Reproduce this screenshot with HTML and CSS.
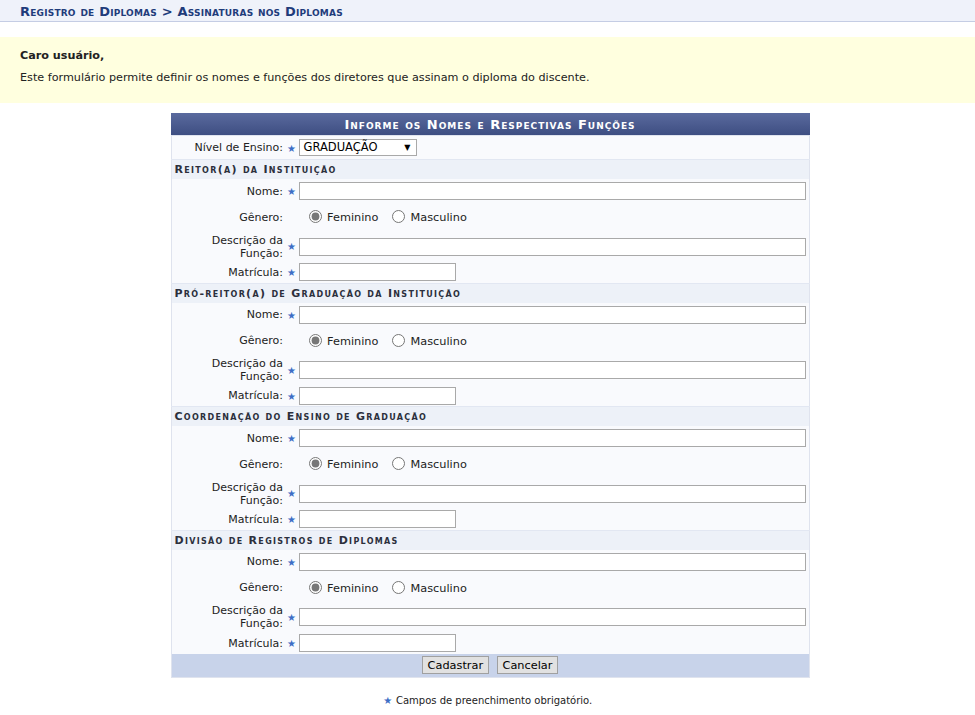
FILE: index.html
```html
<!DOCTYPE html>
<html lang="pt-BR">
<head>
    <meta charset="UTF-8">
    <title>Assinaturas nos Diplomas</title>
    <link rel="stylesheet" href="styles.css">
</head>
<body>
    <h2 class="breadcrumb">Registro de Diplomas &gt; Assinaturas nos Diplomas</h2>

    <div class="descricao">
        <p class="saudacao">Caro usuário,</p>
        <p>Este formulário permite definir os nomes e funções dos diretores que assinam o diploma do discente.</p>
    </div>

    <table class="formulario">
        <caption>Informe os Nomes e Respectivas Funções</caption>
        <tbody>
            <tr class="linha-nivel">
                <th>Nível de Ensino: <span class="req">&#9733;</span></th>
                <td>
                    <div class="select">GRADUAÇÃO <span class="seta">&#9660;</span></div>
                </td>
            </tr>

            <tr class="subtitulo"><td colspan="2">Reitor(a) da Instituição</td></tr>
            <tr class="linha-nome">
                <th>Nome: <span class="req">&#9733;</span></th>
                <td><input type="text" class="campo-longo"></td>
            </tr>
            <tr class="linha-genero">
                <th>Gênero: <span class="espaco"></span></th>
                <td>
                    <label><input type="radio" name="g1" checked> Feminino</label>
                    <label><input type="radio" name="g1"> Masculino</label>
                </td>
            </tr>
            <tr class="linha-descricao">
                <th><span class="rotulo">Descrição da<br>Função:</span> <span class="req">&#9733;</span></th>
                <td><input type="text" class="campo-longo"></td>
            </tr>
            <tr class="linha-matricula">
                <th>Matrícula: <span class="req">&#9733;</span></th>
                <td><input type="text" class="campo-curto"></td>
            </tr>

            <tr class="subtitulo"><td colspan="2">Pró-reitor(a) de Graduação da Instituição</td></tr>
            <tr class="linha-nome">
                <th>Nome: <span class="req">&#9733;</span></th>
                <td><input type="text" class="campo-longo"></td>
            </tr>
            <tr class="linha-genero">
                <th>Gênero: <span class="espaco"></span></th>
                <td>
                    <label><input type="radio" name="g2" checked> Feminino</label>
                    <label><input type="radio" name="g2"> Masculino</label>
                </td>
            </tr>
            <tr class="linha-descricao">
                <th><span class="rotulo">Descrição da<br>Função:</span> <span class="req">&#9733;</span></th>
                <td><input type="text" class="campo-longo"></td>
            </tr>
            <tr class="linha-matricula">
                <th>Matrícula: <span class="req">&#9733;</span></th>
                <td><input type="text" class="campo-curto"></td>
            </tr>

            <tr class="subtitulo"><td colspan="2">Coordenação do Ensino de Graduação</td></tr>
            <tr class="linha-nome">
                <th>Nome: <span class="req">&#9733;</span></th>
                <td><input type="text" class="campo-longo"></td>
            </tr>
            <tr class="linha-genero">
                <th>Gênero: <span class="espaco"></span></th>
                <td>
                    <label><input type="radio" name="g3" checked> Feminino</label>
                    <label><input type="radio" name="g3"> Masculino</label>
                </td>
            </tr>
            <tr class="linha-descricao">
                <th><span class="rotulo">Descrição da<br>Função:</span> <span class="req">&#9733;</span></th>
                <td><input type="text" class="campo-longo"></td>
            </tr>
            <tr class="linha-matricula">
                <th>Matrícula: <span class="req">&#9733;</span></th>
                <td><input type="text" class="campo-curto"></td>
            </tr>

            <tr class="subtitulo"><td colspan="2">Divisão de Registros de Diplomas</td></tr>
            <tr class="linha-nome">
                <th>Nome: <span class="req">&#9733;</span></th>
                <td><input type="text" class="campo-longo"></td>
            </tr>
            <tr class="linha-genero">
                <th>Gênero: <span class="espaco"></span></th>
                <td>
                    <label><input type="radio" name="g4" checked> Feminino</label>
                    <label><input type="radio" name="g4"> Masculino</label>
                </td>
            </tr>
            <tr class="linha-descricao">
                <th><span class="rotulo">Descrição da<br>Função:</span> <span class="req">&#9733;</span></th>
                <td><input type="text" class="campo-longo"></td>
            </tr>
            <tr class="linha-matricula">
                <th>Matrícula: <span class="req">&#9733;</span></th>
                <td><input type="text" class="campo-curto"></td>
            </tr>
        </tbody>
        <tfoot>
            <tr>
                <td colspan="2">
                    <button type="button">Cadastrar</button>
                    <button type="button">Cancelar</button>
                </td>
            </tr>
        </tfoot>
    </table>

    <p class="obrigatorio"><span class="req">&#9733;</span> Campos de preenchimento obrigatório.</p>
</body>
</html>
```

FILE: styles.css
```css
body {
    margin: 0;
    font-family: Verdana, "DejaVu Sans", sans-serif;
    font-size: 11px;
    color: #222;
    background: #fff;
}

.breadcrumb {
    margin: 0;
    height: 21px;
    line-height: 24px;
    padding-left: 20px;
    background: #eff2fa;
    border-bottom: 1px solid #c5cde4;
    color: #1f3c7b;
    font-size: 13px;
    font-weight: bold;
    font-variant: small-caps;
    letter-spacing: 0.2px;
}

.descricao {
    margin-top: 15px;
    height: 66px;
    padding: 0 20px;
    background: #ffffdf;
    overflow: hidden;
    font-size: 11.2px;
}

.descricao p {
    margin: 0;
    line-height: 22px;
}

.descricao .saudacao {
    margin-top: 8px;
    font-weight: bold;
}

.formulario {
    width: 639px;
    margin: 10px 0 0 calc(50% - 317px);
    border-collapse: collapse;
    border: 1px solid #dfe3ee;
    background: #f9fafd;
}

.formulario caption {
    height: 22px;
    line-height: 23px;
    background: linear-gradient(#5a6a9e, #3e4e82);
    color: #fff;
    font-size: 13px;
    font-weight: bold;
    font-variant: small-caps;
    letter-spacing: 1px;
}

.formulario th {
    width: 125px;
    padding: 0 2px 0 0;
    text-align: right;
    font-weight: normal;
    white-space: nowrap;
}

.formulario td {
    padding: 0;
}

.rotulo {
    display: inline-block;
    text-align: right;
    vertical-align: middle;
    line-height: 13px;
}

.req {
    display: inline-block;
    width: 10px;
    color: #3d6ec6;
    font-size: 10px;
    text-align: center;
    vertical-align: middle;
}

.espaco {
    display: inline-block;
    width: 10px;
}

.linha-nivel { height: 24px; }
.linha-nome { height: 24px; }
.linha-genero { height: 28px; }
.linha-descricao { height: 31px; }
.linha-matricula { height: 21px; }

.subtitulo td {
    height: 19px;
    padding-left: 3px;
    background: #edf1f8;
    border-top: 1px solid #e2e7f2;
    color: #2b2f3c;
    font-weight: bold;
    font-variant: small-caps;
    letter-spacing: 1.3px;
}

input[type="text"] {
    box-sizing: border-box;
    height: 18px;
    margin: 0;
    border: 1px solid #a9a9a9;
    background: #fff;
    font: inherit;
    vertical-align: middle;
}

.campo-longo { width: 507px; }
.campo-curto { width: 157px; }

.select {
    box-sizing: border-box;
    width: 118px;
    height: 17px;
    line-height: 15px;
    padding-left: 4px;
    border: 1px solid #a9a9a9;
    background: #fff;
    color: #000;
    font-size: 11.5px;
    position: relative;
}

.seta {
    position: absolute;
    right: 5px;
    top: 0;
    font-size: 8px;
}

.linha-genero label {
    color: #222;
    font-size: 11.3px;
}

.linha-genero input[type="radio"] {
    width: 13px;
    height: 13px;
    margin: 0 2px 0 10px;
    vertical-align: -2px;
    accent-color: #777;
}

tfoot td {
    height: 23px;
    background: #c8d3ea;
    text-align: center;
}

tfoot button {
    height: 18px;
    padding: 0 5px;
    margin: 0 2px;
    border: 1px solid #a0a0a0;
    background: #e1e1e1;
    color: #000;
    font-family: inherit;
    font-size: 11.3px;
}

.obrigatorio {
    margin: 17px 0 0;
    text-align: center;
    font-size: 10px;
    color: #222;
}
```
